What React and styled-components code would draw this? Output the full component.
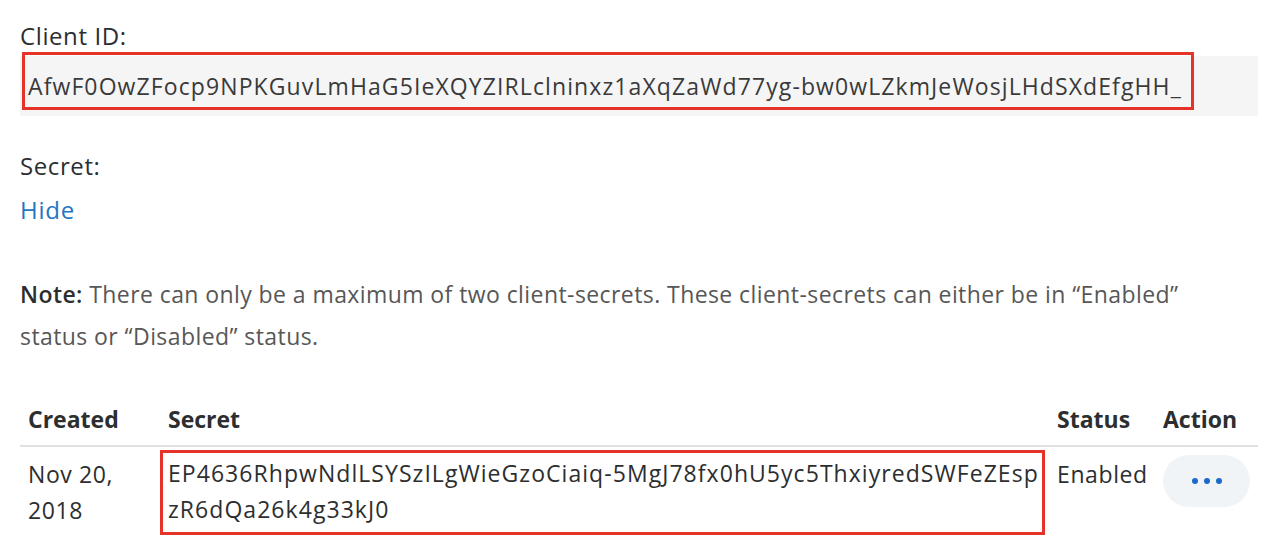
import React from "react";
import styled, { createGlobalStyle } from "styled-components";

const Global = createGlobalStyle`
  body {
    margin: 0;
    background: #ffffff;
    font-family: "Open Sans", "Noto Sans", sans-serif;
    color: #2c2e2f;
  }
`;

const Page = styled.div`
  width: 1238px;
  padding: 21px 0 0 20px;
`;

const Label = styled.div`
  font-size: 24px;
  letter-spacing: 0.6px;
  line-height: 30px;
  margin-top: ${(p) => p.top || 0}px;
`;

const LinkText = styled.div`
  font-size: 24px;
  letter-spacing: 0.8px;
  line-height: 30px;
  color: #1f76c2;
  margin-top: 14px;
`;

const IdWrap = styled.div`
  position: relative;
  margin-top: 5px;
`;

const IdBox = styled.div`
  height: 60px;
  background: #f5f5f5;
  display: flex;
  align-items: center;
  padding: 0 8px;
  font-size: 23px;
  letter-spacing: 1.1px;
  color: #3a3a3a;
`;

/* red annotation frame drawn over the client id */
const Highlight = styled.div`
  position: absolute;
  left: 2px;
  top: -4px;
  width: 1172px;
  height: 58px;
  box-sizing: border-box;
  border: 3px solid #e5332a;
  pointer-events: none;
`;

const Note = styled.p`
  margin: 48px 0 0;
  font-size: 23px;
  letter-spacing: 0.42px;
  line-height: 42px;
  color: #575757;
  width: 1200px;

  b {
    font-weight: 600;
    color: #2c2e2f;
  }
`;

const Table = styled.div`
  display: grid;
  grid-template-columns: 140px 889px 106px 103px;
  margin-top: 47px;
`;

const Head = styled.div`
  font-size: 23px;
  font-weight: 700;
  line-height: 30px;
  padding: 0 0 11px 8px;
  border-bottom: 2px solid #e1e1e1;
`;

const Cell = styled.div`
  font-size: 23px;
  letter-spacing: 0.6px;
  line-height: 36px;
  padding: 9px 0 0 8px;
`;

const SecretCell = styled.div`
  font-size: 23px;
  letter-spacing: 1.05px;
  line-height: 36px;
  margin: 3px 4px 0 0;
  height: 85px;
  box-sizing: border-box;
  padding: 2px 0 0 5px;
  border: 3px solid #e5332a;
  white-space: nowrap;
`;

const ActionCell = styled.div`
  padding: 8px 0 0 8px;
`;

const DotsButton = styled.button`
  width: 87px;
  height: 52px;
  border: none;
  border-radius: 26px;
  background: #f1f4f7;
  display: flex;
  align-items: center;
  justify-content: center;
  gap: 6px;
  padding: 0;
  cursor: pointer;
`;

const Dot = styled.span`
  width: 6px;
  height: 6px;
  border-radius: 50%;
  background: #1b6ac9;
`;

export default function App() {
  return (
    <>
      <Global />
      <Page>
        <Label>Client ID:</Label>
        <IdWrap>
          <IdBox>AfwF0OwZFocp9NPKGuvLmHaG5IeXQYZIRLclninxz1aXqZaWd77yg-bw0wLZkmJeWosjLHdSXdEfgHH_</IdBox>
          <Highlight />
        </IdWrap>

        <Label top={35}>Secret:</Label>
        <LinkText>Hide</LinkText>

        <Note>
          <b>Note:</b> There can only be a maximum of two client-secrets. These client-secrets can either be in “Enabled” status or “Disabled” status.
        </Note>

        <Table>
          <Head>Created</Head>
          <Head>Secret</Head>
          <Head>Status</Head>
          <Head>Action</Head>

          <Cell>
            Nov 20,
            <br />
            2018
          </Cell>
          <SecretCell>
            EP4636RhpwNdlLSYSzILgWieGzoCiaiq-5MgJ78fx0hU5yc5ThxiyredSWFeZEsp
            <br />
            zR6dQa26k4g33kJ0
          </SecretCell>
          <Cell>Enabled</Cell>
          <ActionCell>
            <DotsButton aria-label="Actions">
              <Dot />
              <Dot />
              <Dot />
            </DotsButton>
          </ActionCell>
        </Table>
      </Page>
    </>
  );
}
